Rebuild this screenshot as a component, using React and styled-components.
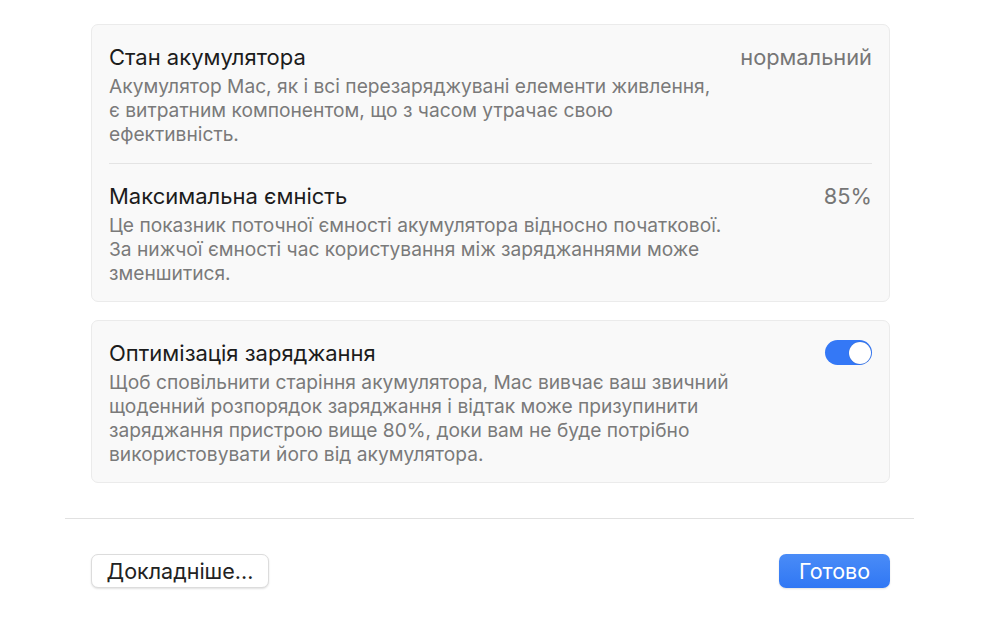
import React from "react";
import styled, { createGlobalStyle } from "styled-components";

const Global = createGlobalStyle`
  html, body { margin: 0; padding: 0; background: #ffffff; }
  body { font-family: Inter, "Noto Sans", "Liberation Sans", sans-serif; -webkit-font-smoothing: antialiased; }
`;

const Page = styled.div`
  width: 1000px;
  height: 619px;
  box-sizing: border-box;
  padding: 24px 0 0 65px;
  display: flex;
  flex-direction: column;
  align-items: flex-start;
  background: #fff;
`;

const Content = styled.div`
  width: 799px;
  margin-left: 26px;
  display: flex;
  flex-direction: column;
  gap: 18px;
`;

const Card = styled.div`
  background: #f9f9f9;
  border: 1px solid #ebebeb;
  border-radius: 7px;
  padding: 0 17px;
`;

const Row = styled.div`
  padding: 19px 0 ${(p) => (p.$last ? "16px" : "17px")};
  border-top: ${(p) => (p.$first ? "none" : "1px solid #e4e4e4")};
`;

const Head = styled.div`
  display: flex;
  justify-content: space-between;
  align-items: center;
  height: 25px;
`;

const Title = styled.div`
  font-size: 22px;
  color: #1c1c1c;
`;

const Value = styled.div`
  font-size: 21.8px;
  color: #767676;
`;

const Desc = styled.div`
  margin-top: 5px;
  font-size: 19.2px;
  line-height: 24px;
  color: #7a7a7a;
  white-space: nowrap;
`;

const Toggle = styled.div`
  width: 47px;
  height: 25px;
  border-radius: 13px;
  background: #3478f6;
  position: relative;
  &::after {
    content: "";
    position: absolute;
    right: 1.5px;
    top: 1.5px;
    width: 22px;
    height: 22px;
    border-radius: 50%;
    background: #fff;
    box-shadow: 0 0 1px rgba(0,0,0,0.3);
  }
`;

const Divider = styled.div`
  width: 849px;
  height: 1px;
  background: #e1e1e1;
  margin-top: 35px;
`;

const Footer = styled.div`
  width: 799px;
  margin-left: 26px;
  display: flex;
  justify-content: space-between;
  margin-top: 35px;
`;

const Button = styled.button`
  height: 34px;
  box-sizing: border-box;
  padding: 0;
  border-radius: 7px;
  font-family: inherit;
  font-size: 21.5px;
  border: ${(p) => (p.$primary ? "none" : "1px solid #dcdcdc")};
  background: ${(p) => (p.$primary ? "linear-gradient(#4a8cf7, #3077f4)" : "#fff")};
  color: ${(p) => (p.$primary ? "#fff" : "#222")};
  box-shadow: 0 1px 2px rgba(0,0,0,0.12);
  width: ${(p) => p.$w}px;
`;

export default function App() {
  return (
    <>
      <Global />
      <Page>
        <Content>
          <Card>
            <Row $first>
              <Head>
                <Title>Стан акумулятора</Title>
                <Value>нормальний</Value>
              </Head>
              <Desc>
                Акумулятор Mac, як і всі перезаряджувані елементи живлення,
                <br />є витратним компонентом, що з часом утрачає свою
                <br />ефективність.
              </Desc>
            </Row>
            <Row $last>
              <Head>
                <Title>Максимальна ємність</Title>
                <Value>85%</Value>
              </Head>
              <Desc>
                Це показник поточної ємності акумулятора відносно початкової.
                <br />За нижчої ємності час користування між заряджаннями може
                <br />зменшитися.
              </Desc>
            </Row>
          </Card>
          <Card>
            <Row $first $last>
              <Head>
                <Title>Оптимізація заряджання</Title>
                <Toggle />
              </Head>
              <Desc>
                Щоб сповільнити старіння акумулятора, Mac вивчає ваш звичний
                <br />щоденний розпорядок заряджання і відтак може призупинити
                <br />заряджання пристрою вище 80%, доки вам не буде потрібно
                <br />використовувати його від акумулятора.
              </Desc>
            </Row>
          </Card>
        </Content>
        <Divider />
        <Footer>
          <Button $w={178}>Докладніше...</Button>
          <Button $primary $w={111}>Готово</Button>
        </Footer>
      </Page>
    </>
  );
}
